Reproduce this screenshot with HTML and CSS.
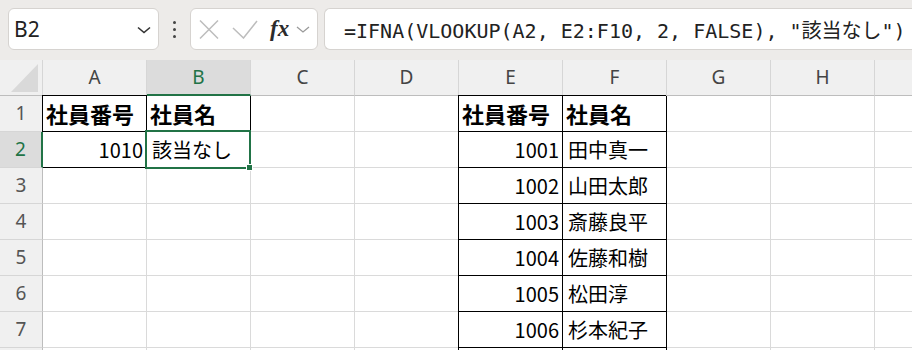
FILE: index.html
```html
<!DOCTYPE html>
<html lang="ja">
<head>
    <meta charset="UTF-8">
    <meta name="viewport" content="width=device-width, initial-scale=1.0">
    <title>IFNA VLOOKUP</title>
    <link rel="stylesheet" href="styles.css">
</head>
<body>
    <div class="toolbar">
        <div class="box namebox">
            <span class="cellref">B2</span>
            <svg class="chev" width="14" height="8" viewBox="0 0 14 8"><path d="M1 1.5 L7 6.5 L13 1.5" fill="none" stroke="#333" stroke-width="1.6"/></svg>
        </div>
        <div class="dots"><span></span><span></span><span></span></div>
        <div class="box fxbox">
            <svg class="ic-x" width="20" height="19" viewBox="0 0 20 19"><path d="M1 0.5 L19 18.5 M19 0.5 L1 18.5" stroke="#bdbdbd" stroke-width="1.5"/></svg>
            <svg class="ic-ok" width="26" height="19" viewBox="0 0 26 19"><path d="M1 8 L11.5 18 L25 1" fill="none" stroke="#bdbdbd" stroke-width="1.5"/></svg>
            <span class="fx">fx</span>
            <svg class="ic-dd" width="14" height="7" viewBox="0 0 14 7"><path d="M1 1 L7 6 L13 1" fill="none" stroke="#9a9a9a" stroke-width="1.3"/></svg>
        </div>
        <div class="box formula">=IFNA(VLOOKUP(A2, E2:F10, 2, FALSE), "該当なし")</div>
    </div>

    <div class="sheet">
        <div class="c hd corner"><svg width="27" height="28" viewBox="0 0 27 28"><polygon points="27,0 27,28 0,28" fill="#d9d9d9"/></svg></div>
        <div class="c hd">A</div>
        <div class="c hd sel">B</div>
        <div class="c hd">C</div>
        <div class="c hd">D</div>
        <div class="c hd">E</div>
        <div class="c hd">F</div>
        <div class="c hd">G</div>
        <div class="c hd">H</div>
        <div class="c hd"></div>

        <div class="c rh">1</div>
        <div class="c b bold">社員番号</div>
        <div class="c b bold">社員名</div>
        <div class="c"></div>
        <div class="c"></div>
        <div class="c b bold">社員番号</div>
        <div class="c b bold">社員名</div>
        <div class="c"></div>
        <div class="c"></div>
        <div class="c"></div>

        <div class="c rh sel">2</div>
        <div class="c b num">1010</div>
        <div class="c b">該当なし</div>
        <div class="c"></div>
        <div class="c"></div>
        <div class="c b num">1001</div>
        <div class="c b">田中真一</div>
        <div class="c"></div>
        <div class="c"></div>
        <div class="c"></div>

        <div class="c rh">3</div>
        <div class="c"></div>
        <div class="c"></div>
        <div class="c"></div>
        <div class="c"></div>
        <div class="c b num">1002</div>
        <div class="c b">山田太郎</div>
        <div class="c"></div>
        <div class="c"></div>
        <div class="c"></div>

        <div class="c rh">4</div>
        <div class="c"></div>
        <div class="c"></div>
        <div class="c"></div>
        <div class="c"></div>
        <div class="c b num">1003</div>
        <div class="c b">斎藤良平</div>
        <div class="c"></div>
        <div class="c"></div>
        <div class="c"></div>

        <div class="c rh">5</div>
        <div class="c"></div>
        <div class="c"></div>
        <div class="c"></div>
        <div class="c"></div>
        <div class="c b num">1004</div>
        <div class="c b">佐藤和樹</div>
        <div class="c"></div>
        <div class="c"></div>
        <div class="c"></div>

        <div class="c rh">6</div>
        <div class="c"></div>
        <div class="c"></div>
        <div class="c"></div>
        <div class="c"></div>
        <div class="c b num">1005</div>
        <div class="c b">松田淳</div>
        <div class="c"></div>
        <div class="c"></div>
        <div class="c"></div>

        <div class="c rh">7</div>
        <div class="c"></div>
        <div class="c"></div>
        <div class="c"></div>
        <div class="c"></div>
        <div class="c b num">1006</div>
        <div class="c b">杉本紀子</div>
        <div class="c"></div>
        <div class="c"></div>
        <div class="c"></div>

        <div class="c rh"></div>
        <div class="c"></div>
        <div class="c"></div>
        <div class="c"></div>
        <div class="c"></div>
        <div class="c b"></div>
        <div class="c b"></div>
        <div class="c"></div>
        <div class="c"></div>
        <div class="c"></div>

        <div class="selection"><span class="handle"></span></div>
    </div>
</body>
</html>
```

FILE: styles.css
```css
* {
    box-sizing: border-box;
}

body {
    margin: 0;
    width: 912px;
    height: 350px;
    overflow: hidden;
    background-color: #fff;
    font-family: "Noto Sans CJK JP", sans-serif;
}

/* formula bar */
.toolbar {
    height: 60px;
    background-color: #edebe9;
    display: flex;
    align-items: flex-start;
    padding: 8px 0 0 8px;
    white-space: nowrap;
    overflow: hidden;
}

.box {
    height: 42px;
    background-color: #fff;
    border: 1px solid #d6d3d0;
    border-radius: 6px;
    display: flex;
    align-items: center;
}

.namebox {
    width: 151px;
    padding: 0 7px 0 5px;
    justify-content: space-between;
}

.cellref {
    font-family: "Noto Sans", sans-serif;
    font-size: 21px;
    color: #222;
}

.chev {
    margin-top: 2px;
}

.dots {
    width: 31px;
    height: 42px;
    display: flex;
    flex-direction: column;
    align-items: center;
    justify-content: center;
    gap: 4px;
}

.dots span {
    width: 3px;
    height: 3px;
    border-radius: 50%;
    background-color: #444;
}

.fxbox {
    width: 128px;
}

.ic-x {
    margin-left: 8px;
}

.ic-ok {
    margin-left: 13px;
}

.fx {
    margin-left: 12px;
    font-family: "Liberation Serif", serif;
    font-style: italic;
    font-weight: bold;
    font-size: 23px;
    color: #2b2b2b;
}

.ic-dd {
    margin-left: 7px;
    margin-top: 1px;
}

.formula {
    margin-left: 6px;
    flex: 1;
    border-right: none;
    border-radius: 6px 0 0 6px;
    padding-left: 19px;
    font-family: "DejaVu Sans Mono", "Noto Sans CJK JP", monospace;
    font-size: 20px;
    color: #222;
}

/* sheet grid */
.sheet {
    position: relative;
    display: grid;
    grid-template-columns: 43px repeat(9, 104px);
    grid-auto-rows: 36px;
}

.c {
    border-right: 1px solid #dadada;
    border-bottom: 1px solid #dadada;
    padding: 0 4px 0 5px;
    font-size: 20px;
    line-height: 35px;
    color: #000;
    white-space: nowrap;
    overflow: hidden;
}

.hd {
    background-color: #f0f0f0;
    border-bottom-color: #bdbdbd;
    border-right-color: #d6d6d6;
    text-align: center;
    padding: 0;
    font-family: "Noto Sans", sans-serif;
    font-size: 19px;
    color: #444;
}

.rh {
    background-color: #f0f0f0;
    border-right-color: #bdbdbd;
    border-bottom-color: #d6d6d6;
    text-align: center;
    padding: 0;
    font-family: "Noto Sans", sans-serif;
    font-size: 19px;
    color: #555;
}

.corner {
    display: flex;
    align-items: flex-end;
    justify-content: flex-end;
    padding: 0 4px 3px 0;
    overflow: visible;
}

.hd.sel {
    background-color: #dcdcdc;
    border-bottom: 2px solid #217346;
    color: #217346;
    position: relative;
    z-index: 1;
}

.rh.sel {
    background-color: #dcdcdc;
    border-right: 2px solid #217346;
    color: #217346;
    position: relative;
    z-index: 1;
}

.b {
    border-right-color: #000;
    border-bottom-color: #000;
    box-shadow: -1px -1px 0 #000;
}

.bold {
    font-weight: bold;
    font-size: 22px;
    padding-left: 3px;
}

.num {
    text-align: right;
    padding-right: 3px;
}

.selection {
    position: absolute;
    left: 145px;
    top: 70px;
    width: 106px;
    height: 39px;
    border: 2px solid #217346;
    z-index: 2;
}

.handle {
    position: absolute;
    right: -4px;
    bottom: -4px;
    width: 7px;
    height: 7px;
    background-color: #217346;
    border: 1px solid #fff;
}
```
